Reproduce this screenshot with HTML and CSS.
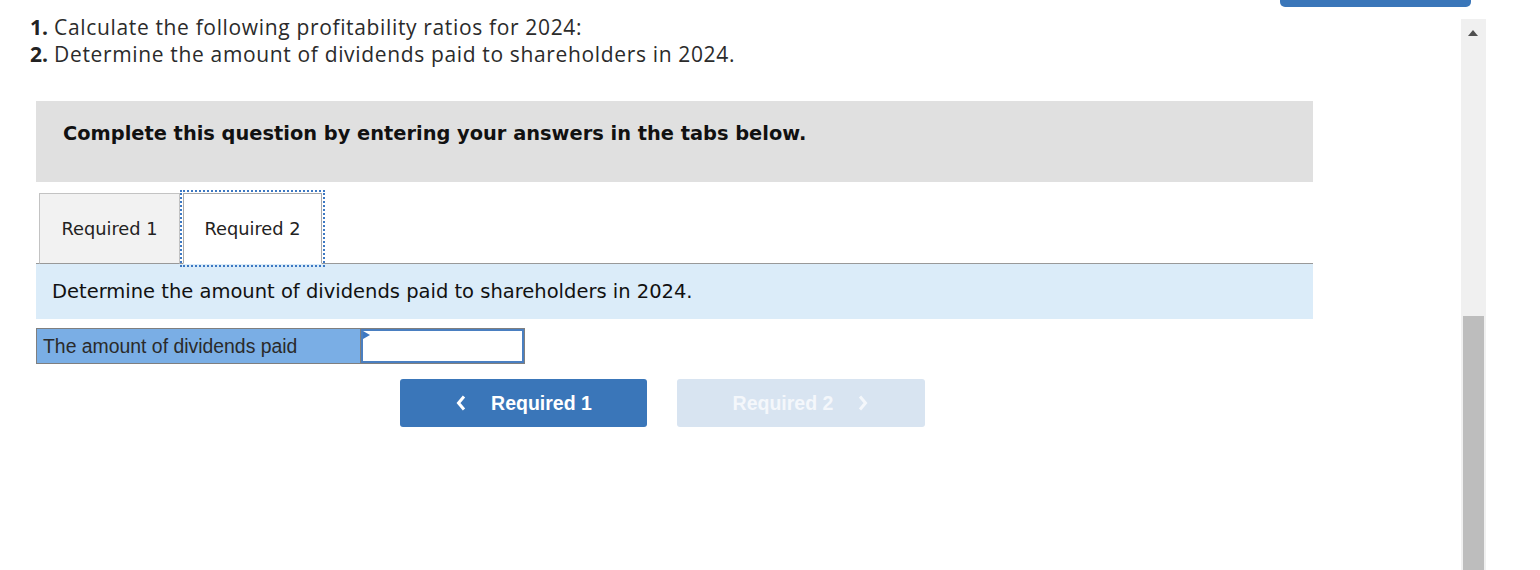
FILE: index.html
```html
<!DOCTYPE html>
<html lang="en">
<head>
<meta charset="utf-8">
<title>Question</title>
<link rel="stylesheet" href="styles.css">
</head>
<body>
<div class="page">
  <div class="top-btn"></div>
  <div class="main">
    <div class="intro">
      <p><b>1.</b> Calculate the following profitability ratios for 2024:</p>
      <p><b>2.</b> Determine the amount of dividends paid to shareholders in 2024.</p>
    </div>
    <div class="panel">
      <div class="instructions">Complete this question by entering your answers in the tabs below.</div>
      <div class="tabs">
        <div class="tab">Required 1</div>
        <div class="tab active">Required 2</div>
      </div>
      <div class="prompt">Determine the amount of dividends paid to shareholders in 2024.</div>
      <div class="answer-row">
        <div class="answer-label">The amount of dividends paid</div>
        <div class="answer-input"><span class="flag"></span></div>
      </div>
      <div class="nav">
        <div class="nav-btn prev">
          <svg width="12" height="18" viewBox="0 0 12 18"><path d="M9 2.5 L3.5 9 L9 15.5" fill="none" stroke="#fff" stroke-width="3"/></svg>
          <span>Required 1</span>
        </div>
        <div class="nav-btn next">
          <span>Required 2</span>
          <svg width="12" height="18" viewBox="0 0 12 18"><path d="M3 2.5 L8.5 9 L3 15.5" fill="none" stroke="#fff" stroke-width="3"/></svg>
        </div>
      </div>
    </div>
  </div>
  <div class="scrollbar">
    <div class="arrow"></div>
    <div class="thumb"></div>
  </div>
</div>
</body>
</html>
```

FILE: styles.css
```css
* { box-sizing: border-box; }
html, body { margin: 0; padding: 0; background: #fff; }
body { width: 1540px; height: 570px; overflow: hidden; }

.page {
  position: relative;
  display: flex;
  height: 570px;
}

.top-btn {
  position: absolute;
  left: 1280px;
  top: -20px;
  width: 191px;
  height: 27px;
  background: #3a76b9;
  border-radius: 5px;
}

.main {
  width: 1461px;
  padding-left: 30px;
}

.intro {
  padding-top: 14px;
  font-family: "Open Sans", sans-serif;
  font-size: 21px;
  letter-spacing: 0.65px;
  line-height: 27px;
  color: #2b2b2b;
}
.intro p { margin: 0; }
.intro b { font-weight: 700; color: #222; letter-spacing: 0; }

.panel {
  margin-left: 6px;
  width: 1277px;
  margin-top: 33px;
}

.instructions {
  background: #e0e0e0;
  height: 81px;
  padding-left: 27px;
  padding-top: 21px;
  font-family: "DejaVu Sans", Verdana, sans-serif;
  font-weight: 700;
  font-size: 19.4px;
  line-height: 24px;
  color: #111;
}

.tabs {
  display: flex;
  margin-top: 11px;
  padding-left: 3px;
  border-bottom: 1px solid #999;
  height: 71px;
  align-items: flex-end;
}

.tab {
  width: 141px;
  height: 71px;
  margin-bottom: -1px;
  background: #f2f2f2;
  border: 1px solid #c3c3c3;
  border-bottom-color: #999;
  display: flex;
  align-items: center;
  justify-content: center;
  font-family: "DejaVu Sans", Verdana, sans-serif;
  font-size: 17.8px;
  color: #222;
}
.tab.active {
  width: 139px;
  margin-left: 3px;
  background: #fff;
  border: 1px solid #aaa;
  border-bottom-color: #fff;
  outline: 2px dotted #3d78c2;
  outline-offset: 1px;
}

.prompt {
  height: 55px;
  background: #dbecf9;
  padding-left: 16px;
  display: flex;
  align-items: center;
  font-family: "DejaVu Sans", Verdana, sans-serif;
  font-size: 19.5px;
  color: #111;
}

.answer-row {
  display: flex;
  margin-top: 9px;
  height: 36px;
}
.answer-label {
  width: 324px;
  background: #7aaee5;
  border: 1px solid #7f7f7f;
  border-right: none;
  padding-left: 6px;
  display: flex;
  align-items: center;
  font-family: "Liberation Sans", Arial, sans-serif;
  font-size: 19.4px;
  color: #2a2a2a;
}
.answer-input {
  position: relative;
  width: 165px;
  border: 1px solid #7f7f7f;
  box-shadow: inset 0 0 0 2px #4a7fc1;
  background: #fff;
}
.flag {
  position: absolute;
  left: 2px;
  top: 2px;
  width: 0;
  height: 0;
  border-top: 4px solid transparent;
  border-bottom: 4px solid transparent;
  border-left: 7px solid #3d78c2;
}

.nav {
  display: flex;
  gap: 30px;
  margin-top: 15px;
  padding-left: 364px;
}
.nav-btn {
  width: 247px;
  height: 48px;
  border-radius: 3px;
  display: flex;
  align-items: center;
  justify-content: center;
  gap: 24px;
  font-family: "Liberation Sans", Arial, sans-serif;
  font-weight: 700;
  font-size: 19.5px;
  color: #fff;
}
.nav-btn.prev { background: #3a76b9; }
.nav-btn.next { background: #d8e4f1; width: 248px; color: #f4f7fb; }
.nav-btn.next svg path { stroke: #f4f7fb; }

.scrollbar {
  position: relative;
  width: 25px;
  margin-top: 19px;
  height: 551px;
  background: #f0f0f0;
}
.arrow {
  position: absolute;
  left: 7px;
  top: 11px;
  width: 0;
  height: 0;
  border-left: 5px solid transparent;
  border-right: 5px solid transparent;
  border-bottom: 6px solid #505050;
}
.thumb {
  position: absolute;
  left: 2px;
  right: 2px;
  top: 297px;
  bottom: 0;
  background: #bdbdbd;
}
```
